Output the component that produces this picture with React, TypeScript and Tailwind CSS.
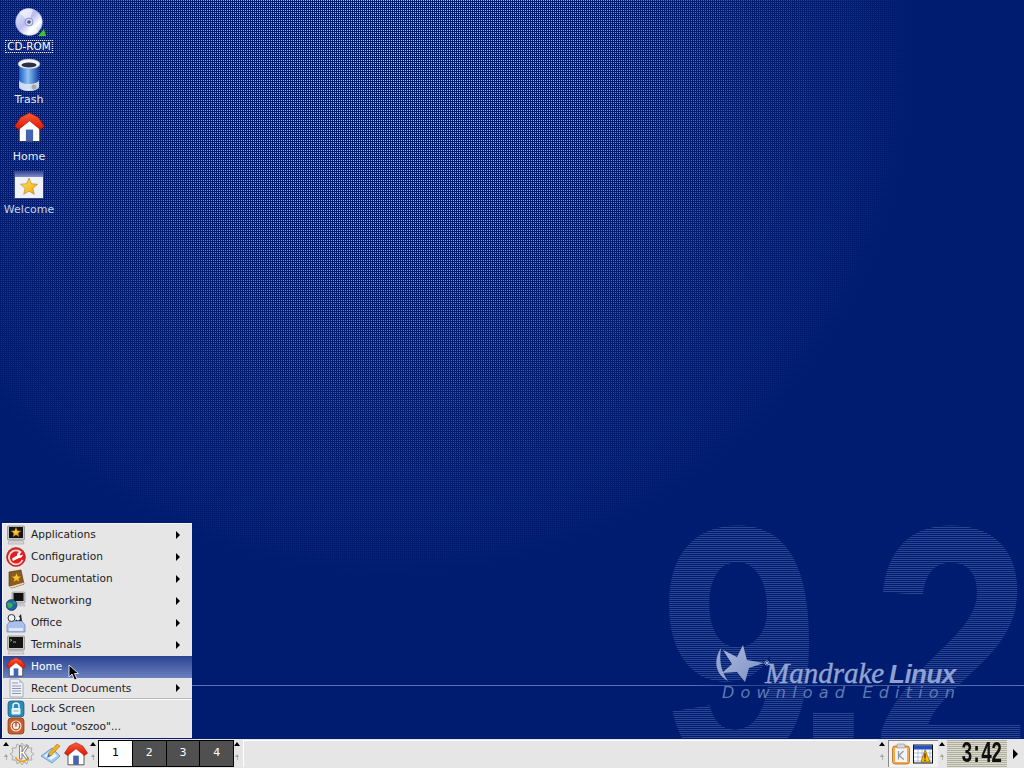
const uiFont = "font-['DejaVu_Sans',sans-serif]";

function Defs() {
  return (
    <svg className="absolute h-0 w-0">
      <defs>
        <linearGradient id="roof" x1="0" y1="0" x2="0" y2="1">
          <stop offset="0" stopColor="#ff5a3c" />
          <stop offset="1" stopColor="#d81800" />
        </linearGradient>
        <linearGradient id="glass" x1="0" y1="0" x2="1" y2="0">
          <stop offset="0" stopColor="#1c58c8" />
          <stop offset="0.45" stopColor="#8fc4f4" />
          <stop offset="1" stopColor="#0f3fa0" />
        </linearGradient>
        <linearGradient id="disc" x1="0" y1="0" x2="1" y2="1">
          <stop offset="0" stopColor="#f4f4ff" />
          <stop offset="0.45" stopColor="#b8bcf0" />
          <stop offset="0.7" stopColor="#ffffff" />
          <stop offset="1" stopColor="#9aa4e0" />
        </linearGradient>
        <linearGradient id="titlebar" x1="0" y1="0" x2="0" y2="1">
          <stop offset="0" stopColor="#3c4f98" />
          <stop offset="1" stopColor="#7f8fc8" />
        </linearGradient>
        <linearGradient id="star" x1="0" y1="0" x2="1" y2="1">
          <stop offset="0" stopColor="#ffe96a" />
          <stop offset="1" stopColor="#f0a400" />
        </linearGradient>
        <linearGradient id="logoStar" x1="0" y1="0" x2="1" y2="1">
          <stop offset="0" stopColor="#aab8dc" />
          <stop offset="1" stopColor="#7c90c4" />
        </linearGradient>
      </defs>
    </svg>
  );
}

function HomeIcon({ size }: { size: number }) {
  return (
    <svg width={size} height={size} viewBox="0 0 30 30">
      <path d="M5 13v15.5h20V13L15 6z" fill="#fff" stroke="#333" strokeWidth="1" />
      <rect x="11.5" y="17" width="7" height="11.5" fill="#4464b0" />
      <path d="M15 .8 23.5 5 29.5 14 25.5 17 15 8.5 4.5 17 .5 14 6.5 5z" fill="url(#roof)" stroke="#8a1000" strokeWidth=".6" />
    </svg>
  );
}

function Star({ x, y, r }: { x: number; y: number; r: number }) {
  const pts = Array.from({ length: 10 }, (_, i) => {
    const rad = i % 2 === 0 ? r : r * 0.45;
    const a = (Math.PI / 5) * i - Math.PI / 2;
    return `${(x + rad * Math.cos(a)).toFixed(1)},${(y + rad * Math.sin(a)).toFixed(1)}`;
  }).join(" ");
  return <polygon points={pts} fill="url(#star)" stroke="#a86a00" strokeWidth=".5" />;
}

function Monitor({ children }: { children?: React.ReactNode }) {
  return (
    <svg width="20" height="20" viewBox="0 0 20 20">
      <path d="M3 16h14l1 3H2z" fill="#d8d8d8" stroke="#999" strokeWidth=".5" />
      <rect x="1.5" y="1" width="17" height="14" rx="1" fill="#c4c4c4" stroke="#777" strokeWidth=".6" />
      <rect x="3" y="2" width="14" height="11" fill="#141414" />
      {children}
    </svg>
  );
}

const menuIcons: Record<string, React.ReactNode> = {
  Applications: (
    <Monitor>
      <Star x={10} y={7.5} r={5} />
    </Monitor>
  ),
  Configuration: (
    <svg width="20" height="20" viewBox="0 0 20 20">
      <circle cx="10" cy="10" r="9.5" fill="#e02020" stroke="#901010" strokeWidth=".5" />
      <path d="M15 5.500A7 7 0 1 0 16.500 13" fill="none" stroke="#f8d8d0" strokeWidth="1.800" />
      <path d="M15.500 5a3.400 3.400 0 0 0-4.500 3.600L6 11.500l1 2.500 6-3a3.400 3.400 0 0 0 3.800-3.600l-2 1-1.200-1z" fill="#fff" />
    </svg>
  ),
  Documentation: (
    <svg width="20" height="20" viewBox="0 0 20 20">
      <path d="M3 3 15 1l3 14-12 4-3-2z" fill="#8a5a20" stroke="#4c2e08" strokeWidth=".6" />
      <path d="M3 17l3 2 12-4-.4-1.4L6 17z" fill="#e8dcc0" />
      <Star x={10.5} y={9} r={5} />
    </svg>
  ),
  Networking: (
    <svg width="20" height="20" viewBox="0 0 20 20">
      <rect x="6" y="1" width="13" height="11" rx="1" fill="#c8c8c8" stroke="#777" strokeWidth=".5" />
      <rect x="7.5" y="2" width="10" height="8" fill="#111" />
      <path d="M8 13h10l1 2H9z" fill="#d4d4d4" stroke="#999" strokeWidth=".4" />
      <circle cx="5.500" cy="14" r="5.500" fill="#2060b0" stroke="#123" strokeWidth=".5" />
      <path d="M1.500 12c2-1.500 3.500 0 4.500 .5s1 2.500 0 3.500-2 1.500-3 1-2.500-3.500-1.500-5z" fill="#38b050" />
      <path d="M7 9.500c1 .5 2.500 2 3 3.500l-2.500-1z" fill="#38b050" />
    </svg>
  ),
  Office: (
    <svg width="20" height="20" viewBox="0 0 20 20">
      <path d="M1 12 4 8h12l3 4v7H1z" fill="#a8c0ec" stroke="#5a70a8" strokeWidth=".6" />
      <path d="M3 15h14v3H3z" fill="#dfe8f8" />
      <circle cx="5.500" cy="5" r="3.500" fill="#f0f0f0" stroke="#333" strokeWidth="1" />
      <path d="M9 8 15 1l1 7z" fill="#222" />
      <circle cx="12" cy="5.500" r="2" fill="#f4f4f4" />
    </svg>
  ),
  Terminals: (
    <Monitor>
      <path d="M4 4l2 1.200-2 1.200" stroke="#6ce06c" strokeWidth=".8" fill="none" />
      <path d="M7 7h3" stroke="#d0d0d0" strokeWidth=".8" />
    </Monitor>
  ),
  Home: <HomeIcon size={20} />,
  "Recent Documents": (
    <svg width="20" height="20" viewBox="0 0 20 20">
      <path d="M4 1h9l4 4v14H4z" fill="#eef0f6" stroke="#8a90a8" strokeWidth=".7" />
      <path d="M13 1v4h4z" fill="#c4c8d8" />
      <path d="M6 5h6M6 8h9M6 10.500h9M6 13h9M6 15.500h9" stroke="#8f96b4" strokeWidth="1" />
    </svg>
  ),
  "Lock Screen": (
    <svg width="18" height="18" viewBox="0 0 18 18">
      <rect x="1" y="1" width="16" height="16" rx="3" fill="#2a8ab8" stroke="#14587c" strokeWidth=".7" />
      <path d="M6 8V6a3 3 0 0 1 6 0v2" stroke="#e8f4fa" strokeWidth="1.500" fill="none" />
      <rect x="4.500" y="8" width="9" height="6.500" rx="1" fill="#e8f4fa" />
      <rect x="6.500" y="10.500" width="5" height="1" fill="#7ab4d0" />
    </svg>
  ),
  'Logout "oszoo"...': (
    <svg width="18" height="18" viewBox="0 0 18 18">
      <rect x="1" y="1" width="16" height="16" rx="3" fill="#c85c2c" stroke="#843414" strokeWidth=".7" />
      <circle cx="9" cy="9" r="5.500" fill="#f8ece4" />
      <circle cx="9" cy="9" r="3.800" fill="none" stroke="#b84c20" strokeWidth="1.200" />
      <path d="M9 4.500v5" stroke="#b84c20" strokeWidth="1.400" />
    </svg>
  ),
};

function MenuRow({ label, sub, active, h, pad = "pb-[2px]" }: { label: string; sub?: boolean; active?: boolean; h: string; pad?: string }) {
  return (
    <div
      className={`flex items-center ${h} ${
        active ? "bg-gradient-to-b from-[#2a4390] to-[#6d82bf] text-white" : "text-[#1c1c1c]"
      }`}
    >
      <div className="flex w-[28px] shrink-0 items-center justify-center pr-[3px]">{menuIcons[label]}</div>
      <span className={`flex-1 ${pad} text-[10.6px] leading-none`}>{label}</span>
      {sub && (
        <span className="mr-[12px] h-0 w-0 border-y-[4px] border-l-[4px] border-y-transparent border-l-black" />
      )}
    </div>
  );
}

function Handle() {
  return (
    <div className="flex w-[8px] shrink-0 flex-col items-center self-stretch pt-[3px]">
      <span className="h-0 w-0 border-x-[3.5px] border-b-[4px] border-x-transparent border-b-black" />
      <span className="mt-[8px] h-0 w-0 border-x-[2px] border-b-[3px] border-x-transparent border-b-[#a0a0a0]" />
      <span className="h-[3px] w-px bg-[#b0b0b0]" />
    </div>
  );
}

function KIcon() {
  return (
    <svg width="24" height="24" viewBox="0 0 24 24">
      <path
        d="M12 1l2 3 3-2 1 4 4 0-1 4 3 2-3 2 1 4-4 0-1 4-3-2-2 3-2-3-3 2-1-4-4 0 1-4-3-2 3-2-1-4 4 0 1-4 3 2z"
        fill="#e4e4e4"
        stroke="#8c8c8c"
        strokeWidth=".6"
      />
      <path d="M5.500 15a7 7 0 0 0 13 0" fill="none" stroke="#f0a020" strokeWidth="1.800" />
      <path d="M9.500 4h2.500v6l4-6h2.500l-4 6.500 4 6.500H16l-4-5.500V17H9.500z" fill="#f8f8f8" stroke="#666" strokeWidth=".8" />
    </svg>
  );
}

function BrushIcon() {
  return (
    <svg width="22" height="22" viewBox="0 0 22 22">
      <path d="M1 13 12 5l8 8-8 7z" fill="#a4ccf4" stroke="#4c84c8" strokeWidth=".7" />
      <path d="M4 13l8-6 5 6-6 4z" fill="#e8f4ff" />
      <path d="M17 1 20 3 11 13 8 11z" fill="#f0b020" stroke="#9c6a10" strokeWidth=".5" />
      <path d="M8 11l3 2-4 2z" fill="#3c74c4" />
    </svg>
  );
}

function ClipIcon() {
  return (
    <svg width="20" height="22" viewBox="0 0 20 22">
      <rect x="1.500" y="3" width="17" height="18" rx="2.500" fill="#f4a850" stroke="#b86a14" strokeWidth=".8" />
      <rect x="4" y="5" width="12" height="14" fill="#f4f4f0" />
      <rect x="6" y="1" width="8" height="4" rx="1" fill="#d8d8d8" stroke="#888" strokeWidth=".6" />
      <path d="M7.500 8v8.500M12.500 8 8 12.500l4.800 4" stroke="#8c94a4" strokeWidth="1.200" fill="none" />
    </svg>
  );
}

function CalendarIcon() {
  return (
    <svg width="20" height="20" viewBox="0 0 20 20">
      <rect x=".5" y="1" width="19" height="18" fill="#fff" stroke="#111" />
      <rect x="1" y="1.500" width="18" height="4" fill="#2450c0" />
      <path d="M1 9h18M1 13h18M1 17h18M5 5v14M9 5v14M13 5v14M17 5v14" stroke="#8898c8" strokeWidth=".6" />
      <path d="M12 6 17 18H8z" fill="#f0c800" stroke="#704800" strokeWidth=".6" />
      <path d="M12 9.500v5M12 15.500v1.500" stroke="#901010" strokeWidth="1.400" />
    </svg>
  );
}

function DesktopIcons() {
  return (
    <>
      <div className="absolute left-0 top-[8px] flex w-[60px] flex-col items-center">
        <svg width="34" height="30" viewBox="0 0 34 30" className="-ml-[1px]">
          <circle cx="16" cy="14" r="13.500" fill="url(#disc)" stroke="#8088b8" strokeWidth=".5" />
          <path d="M16 14 6 4A14 14 0 0 1 20 1zM16 14l10 10a14 14 0 0 1-12 3z" fill="#ffffff" opacity=".55" />
          <circle cx="16" cy="14" r="4" fill="#d4d8f4" stroke="#7078b0" strokeWidth=".7" />
          <circle cx="16" cy="14" r="1.800" fill="#4a5290" />
          <path d="M25 28 31 21l2 7z" fill="#3fc02f" />
        </svg>
        <span className="-ml-[2px] mt-[2px] border border-dotted border-[#e4e4e4] px-px text-[10.4px] leading-[11px] text-white">CD-ROM</span>
      </div>
      <div className="absolute left-0 top-[58px] flex w-[58px] flex-col items-center">
        <svg width="24" height="34" viewBox="0 0 24 34">
          <path d="M2 6v23a10 4 0 0 0 20 0V6z" fill="url(#glass)" />
          <path d="M2 22v7a10 4 0 0 0 20 0v-7a10 4 0 0 1-20 0z" fill="#dce6f4" opacity=".9" />
          <ellipse cx="12" cy="6" rx="11" ry="5" fill="#f4f4f8" stroke="#8a92a8" strokeWidth=".6" />
          <ellipse cx="12" cy="7" rx="7.500" ry="2.500" fill="#2a2f48" />
          <circle cx="17" cy="29" r="2.500" fill="#a8a8a8" />
        </svg>
        <span className="mt-[1px] text-[11px] leading-[13px] text-[#e8ecf4]">Trash</span>
      </div>
      <div className="absolute left-0 top-[112px] flex w-[58px] flex-col items-center">
        <HomeIcon size={31} />
        <span className="mt-[7px] text-[11px] leading-[13px] text-[#e8ecf4]">Home</span>
      </div>
      <div className="absolute left-0 top-[171px] flex w-[58px] flex-col items-center">
        <svg width="30" height="28" viewBox="0 0 30 28">
          <rect x=".5" y=".5" width="29" height="27" fill="#f0f2fa" stroke="#3a4684" />
          <rect x="1" y="1" width="28" height="5" fill="url(#titlebar)" />
          <Star x={15} y={16} r={9} />
        </svg>
        <span className="mt-[4px] text-[11px] leading-[13px] text-[#c8d0e4]">Welcome</span>
      </div>
    </>
  );
}

function MandrakeLogo() {
  return (
    <>
      <svg className="absolute left-[714px] top-[643px]" width="56" height="44" viewBox="0 0 56 44">
        <path d="M7 5C-1 17 1 31 14 38 7 28 5 18 7 5z" fill="#93a4d0" />
        <path d="M29 2 33 17 50 20 35 25 31 39 23 29 8 30 18 21 9 7 23 14z" fill="url(#logoStar)" />
        <path d="M50 20 H56 M53 17 V23 M51 18 L55 22 M55 18 L51 22" stroke="#aab8dc" strokeWidth=".8" />
      </svg>
      <span className="absolute left-[765px] top-[657px] font-['Liberation_Serif',serif] text-[29px] italic leading-[32px] text-[#93a4d0] [-webkit-text-stroke:0.4px_#93a4d0]">
        Mandrake
      </span>
      <span className="absolute left-[889px] top-[658px] font-['Liberation_Sans',sans-serif] text-[26px] font-bold italic leading-[32px] tracking-[-0.5px] text-[#8fa1d0]">
        Linux
      </span>
      <span className="absolute left-[722px] top-[684px] font-['DejaVu_Sans',sans-serif] text-[16px] italic leading-[17px] tracking-[6.2px] text-[#6078b4]">
        Download Edition
      </span>
    </>
  );
}

export default function App() {
  return (
    <div className={`relative flex h-[768px] w-[1024px] flex-col overflow-hidden bg-[#e6e6e6] ${uiFont}`}>
      <Defs />
      {/* wallpaper */}
      <div className="relative flex-1 overflow-hidden [background-image:radial-gradient(ellipse_530px_520px_at_390px_60px,rgba(0,28,112,0.12)_0%,rgba(0,28,112,0.3)_35%,rgba(0,28,112,0.72)_68%,rgb(0,28,112)_100%),conic-gradient(#e4e4dc_25%,#001c70_0)] [background-size:100%_100%,2px_2px]">
        <div className="absolute left-[659px] top-[475px] flex origin-left scale-x-[0.85] bg-[repeating-linear-gradient(180deg,#2a4690_0,#2a4690_1px,transparent_1px,transparent_2px)] bg-clip-text font-['Liberation_Sans',sans-serif] text-[340px] font-bold leading-[340px] text-transparent">
          <span className="tracking-[-31px]">9</span>
          <span className="tracking-[-3px]">.</span>
          <span>2</span>
        </div>
        <div className="absolute left-[192px] right-0 top-[685px] h-px bg-[linear-gradient(90deg,#5a72b4_0%,#5a72b4_60%,#2c4690_68%,#5a72b4_100%)]" />
        <MandrakeLogo />
        <DesktopIcons />
      </div>

      {/* K menu */}
      <div className="absolute left-[2px] top-[523px] flex h-[215px] w-[190px] flex-col border-l border-t border-[#f4f4f4] bg-[#e6e6e6]">
        <MenuRow label="Applications" sub h="h-[22px]" />
        <MenuRow label="Configuration" sub h="h-[22px]" />
        <MenuRow label="Documentation" sub h="h-[22px]" />
        <MenuRow label="Networking" sub h="h-[22px]" />
        <MenuRow label="Office" sub h="h-[22px]" />
        <MenuRow label="Terminals" sub h="h-[22px]" />
        <MenuRow label="Home" active h="h-[22px]" />
        <MenuRow label="Recent Documents" sub h="h-[20px]" pad="pb-0" />
        <div className="h-[2px] border-b border-white bg-[#b4b4b4]" />
        <MenuRow label="Lock Screen" h="h-[17px]" pad="pb-0" />
        <MenuRow label={'Logout "oszoo"...'} h="h-[18px]" pad="pb-0" />
      </div>

      {/* cursor */}
      <svg className="absolute left-[68px] top-[664px]" width="12" height="17" viewBox="0 0 12 17">
        <path d="M1 1v12l3-3 2.500 6 2.500-1-2.500-5.500H10.500z" fill="#000" stroke="#fff" strokeWidth=".8" />
      </svg>

      {/* panel */}
      <div className="flex h-[29px] shrink-0 items-center bg-[#e6e6e6] pl-[2px]">
        <Handle />
        <div className="flex w-[24px] shrink-0 justify-center">
          <KIcon />
        </div>
        <div className="ml-[6px] flex w-[22px] shrink-0 justify-center">
          <BrushIcon />
        </div>
        <div className="ml-[2px] flex w-[24px] shrink-0 justify-center">
          <HomeIcon size={24} />
        </div>
        <div className="ml-px flex self-stretch">
          <Handle />
        </div>
        <div className="ml-px flex h-[27px] w-[136px] shrink-0 border border-black bg-black text-[11px]">
          <div className="flex flex-1 items-center justify-center bg-white text-black">1</div>
          <div className="ml-px flex flex-1 items-center justify-center bg-[#505050] text-white">2</div>
          <div className="ml-px flex flex-1 items-center justify-center bg-[#505050] text-white">3</div>
          <div className="ml-px flex flex-1 items-center justify-center bg-[#505050] text-white">4</div>
        </div>
        <div className="-ml-px flex self-stretch">
          <Handle />
        </div>
        <div className="ml-[2px] h-[27px] flex-1 border-l border-t border-white" />
        <Handle />
        <div className="ml-[2px] flex h-[27px] w-[50px] shrink-0 items-center gap-[2px] border-l border-t border-[#888] bg-[#f2f2f2] pl-[2px]">
          <ClipIcon />
          <CalendarIcon />
        </div>
        <Handle />
        <div className="ml-px flex h-[27px] w-[60px] shrink-0 items-center justify-center overflow-hidden bg-[repeating-linear-gradient(180deg,#b0b0a0_0,#b0b0a0_1px,#dcdacc_1px,#dcdacc_2px)] pl-[8px]">
          <span className="inline-block shrink-0 scale-x-[0.62] font-['Liberation_Mono',monospace] text-[30px] font-bold leading-none tracking-[-2px] text-[#101010]">
            3:42
          </span>
        </div>
        <div className="flex w-[17px] shrink-0 items-center justify-center">
          <span className="h-0 w-0 border-y-[5px] border-l-[5px] border-y-transparent border-l-black" />
        </div>
      </div>
    </div>
  );
}
